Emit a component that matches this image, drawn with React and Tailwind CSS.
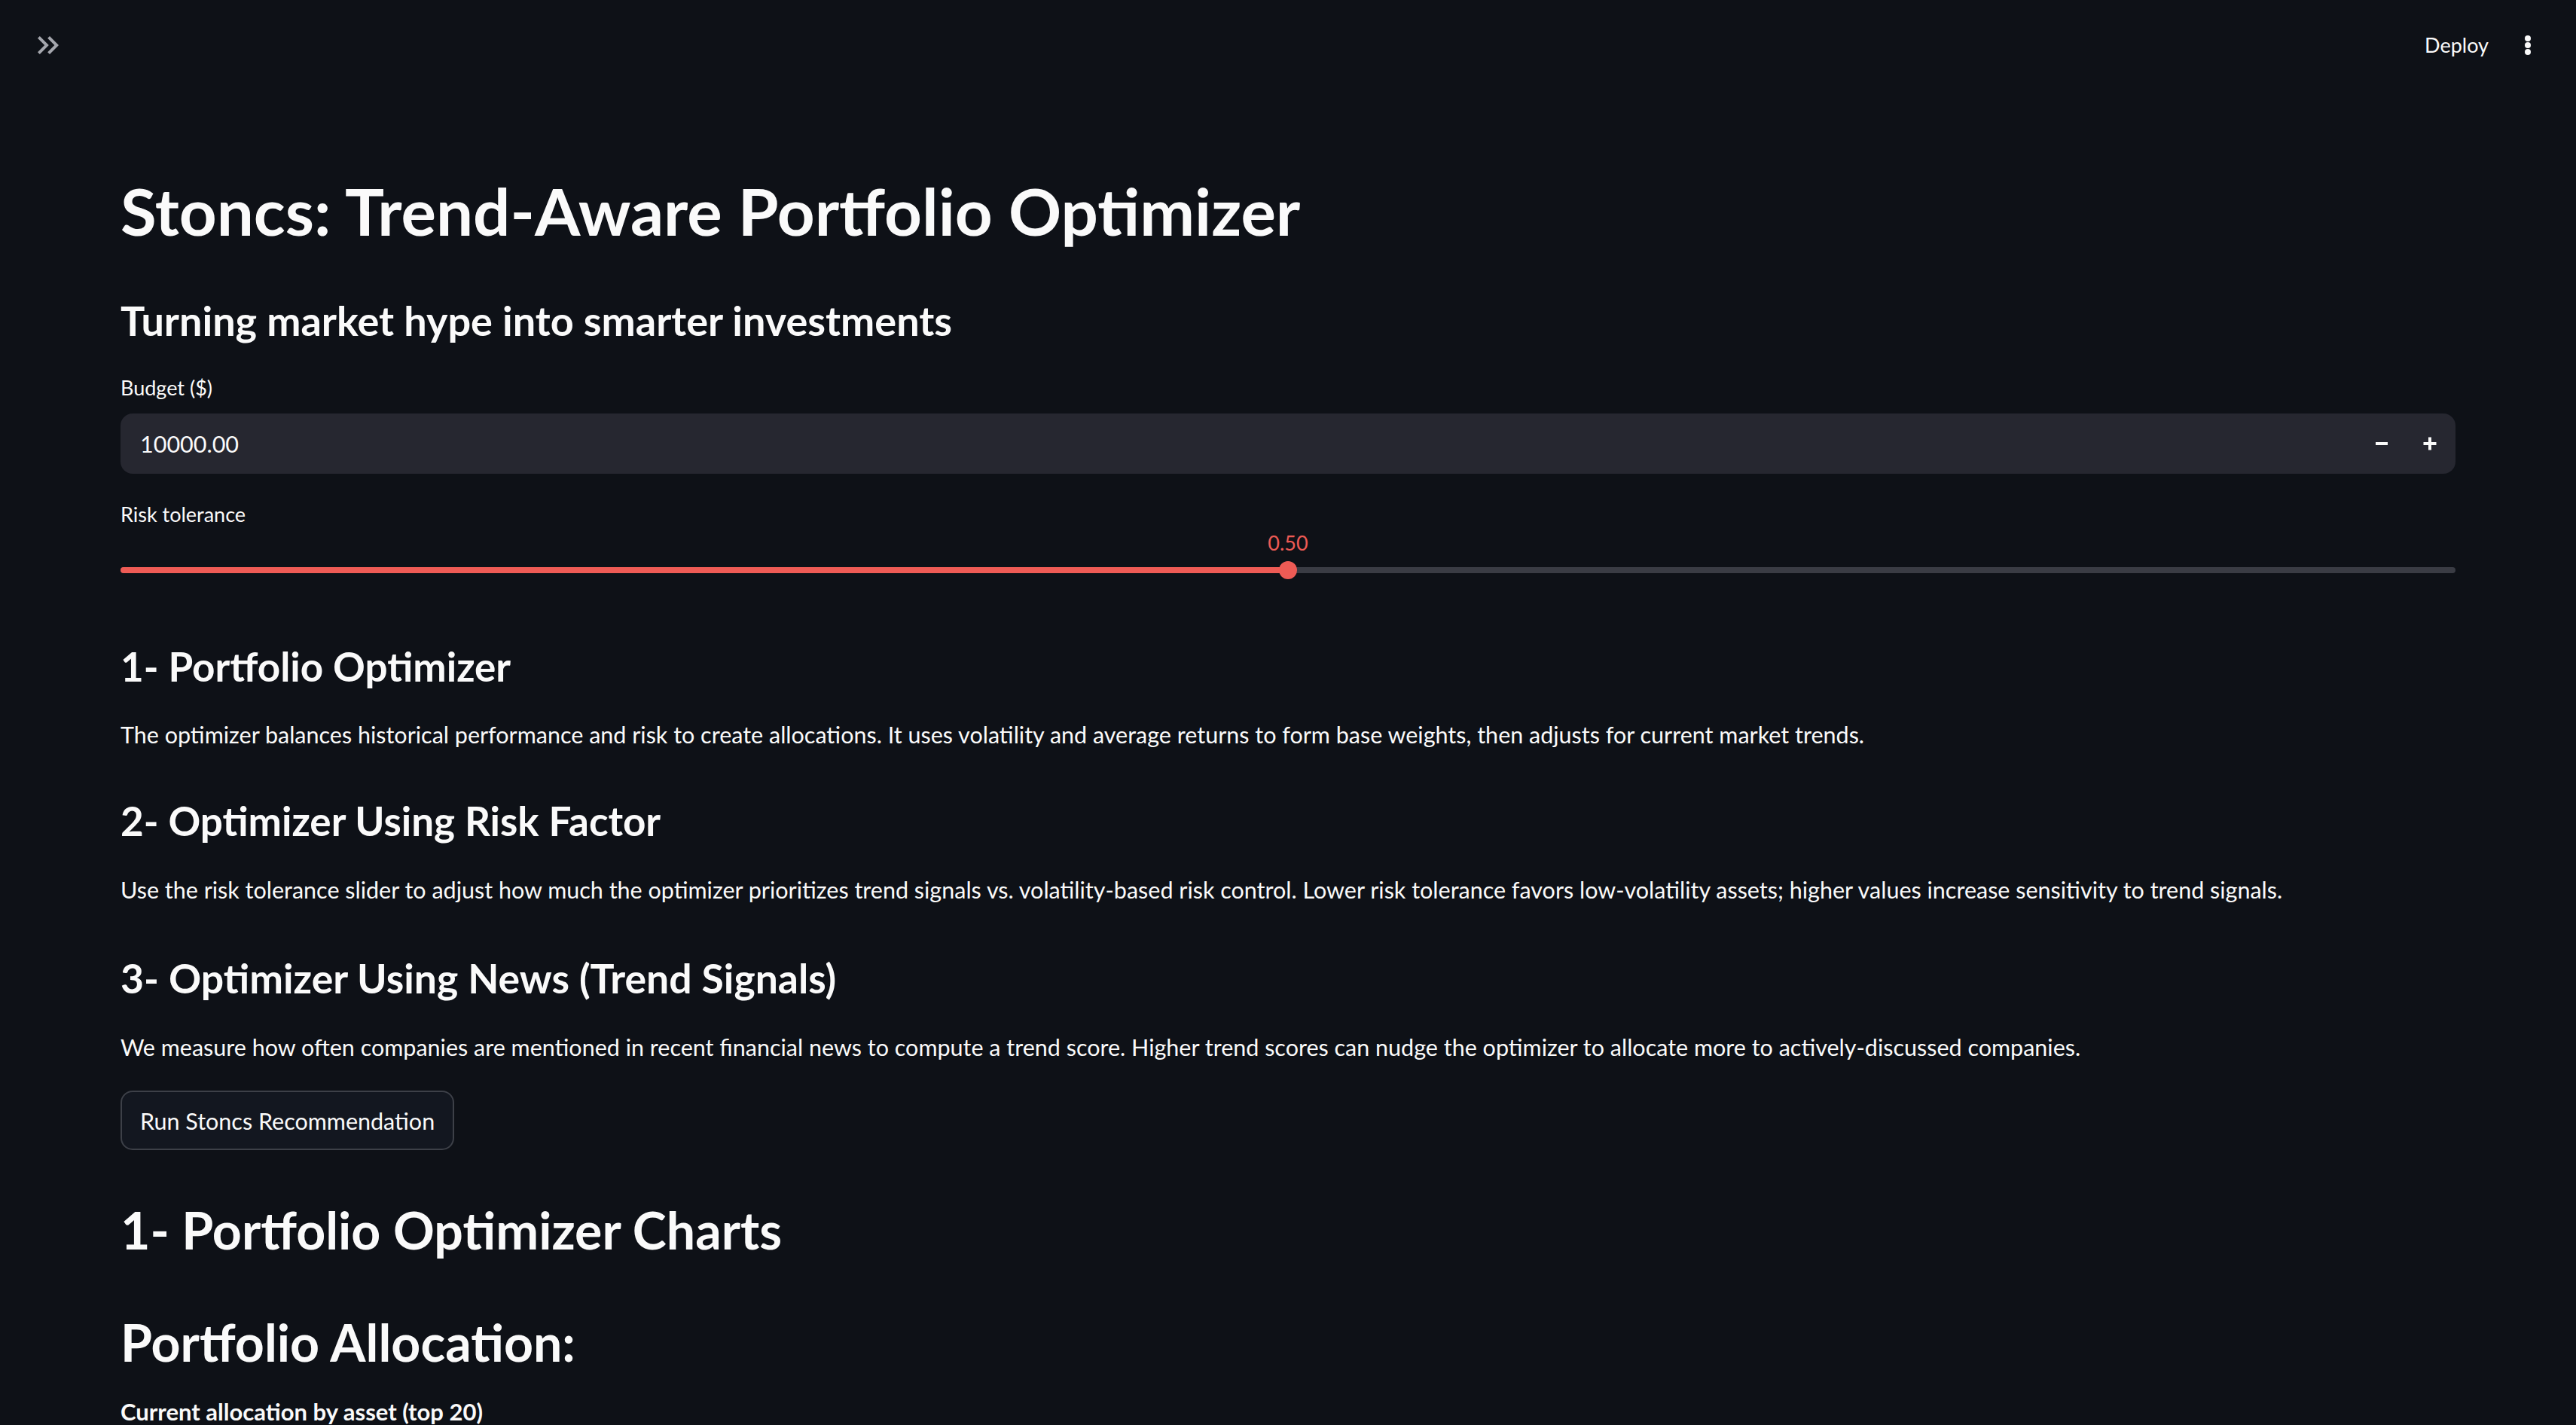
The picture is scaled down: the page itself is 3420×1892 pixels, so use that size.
import React from "react";

function ChevronsIcon() {
  return (
    <svg width="48" height="48" viewBox="0 0 24 24" fill="#a4a6ad">
      <path d="M6.41 6 5 7.41 9.58 12 5 16.59 6.41 18l6-6z" />
      <path d="M13 6l-1.41 1.41L16.17 12l-4.58 4.59L13 18l6-6z" />
    </svg>
  );
}

function DotsIcon() {
  return (
    <svg width="40" height="40" viewBox="0 0 40 40" fill="#fafafa">
      <circle cx="20" cy="11" r="4" />
      <circle cx="20" cy="20" r="4" />
      <circle cx="20" cy="29" r="4" />
    </svg>
  );
}

function MinusIcon() {
  return (
    <svg width="18" height="18" viewBox="0 0 18 18">
      <rect x="1" y="7" width="16" height="4" fill="#fafafa" />
    </svg>
  );
}

function PlusIcon() {
  return (
    <svg width="18" height="18" viewBox="0 0 18 18">
      <rect x="0.5" y="7" width="17" height="4" fill="#fafafa" />
      <rect x="7" y="0.5" width="4" height="17" fill="#fafafa" />
    </svg>
  );
}

export default function App() {
  return (
    <div className="min-h-screen w-full bg-[#0e1117] text-[#fafafa] font-['Lato','Noto_Sans',sans-serif]">
      {/* Header */}
      <div className="h-[120px] flex items-center justify-between pl-[40px] pr-[44px]">
        <ChevronsIcon />
        <div className="flex items-center gap-[32px]">
          <span className="text-[27px] leading-[40px]">Deploy</span>
          <DotsIcon />
        </div>
      </div>

      {/* Main */}
      <div className="pl-[160px] pr-[160px] flex flex-col">
        <h1 className="mt-[108px] text-[87px] leading-[104px] font-bold">
          Stoncs: Trend-Aware Portfolio Optimizer
        </h1>
        <h3 className="mt-[58px] text-[54px] leading-[72px] font-bold">
          Turning market hype into smarter investments
        </h3>

        <label className="mt-[33px] text-[27px] leading-[40px]">Budget ($)</label>
        <div className="mt-[14px] h-[80px] rounded-[16px] bg-[#262730] flex items-center">
          <span className="flex-1 pl-[26px] text-[30.5px] leading-[48px]">10000.00</span>
          <div className="flex items-center pr-[2px]">
            <div className="w-[64px] h-[80px] flex items-center justify-center">
              <MinusIcon />
            </div>
            <div className="w-[64px] h-[80px] flex items-center justify-center">
              <PlusIcon />
            </div>
          </div>
        </div>

        <label className="mt-[34px] text-[27px] leading-[40px]">Risk tolerance</label>
        <div className="relative h-[78px] pt-[50px]">
          <div className="h-[8px] rounded-full bg-[#3a3c44] flex">
            <div className="w-1/2 h-full rounded-l-full bg-[#ee5b55]" />
          </div>
          <div className="absolute left-1/2 -translate-x-1/2 top-[-2px] text-[27px] leading-[40px] text-[#ee5b55]">
            0.50
          </div>
          <div className="absolute left-1/2 -translate-x-1/2 top-[42px] w-[24px] h-[24px] rounded-full bg-[#ee5b55]" />
        </div>

        <h3 className="mt-[68px] text-[53px] leading-[72px] font-bold">1- Portfolio Optimizer</h3>
        <p className="mt-[30px] text-[30.5px] leading-[48px]">
          The optimizer balances historical performance and risk to create allocations. It uses volatility and average returns to form base weights, then adjusts for current market trends.
        </p>

        <h3 className="mt-[55px] text-[53px] leading-[72px] font-bold">2- Optimizer Using Risk Factor</h3>
        <p className="mt-[31px] text-[30.5px] leading-[48px]">
          Use the risk tolerance slider to adjust how much the optimizer prioritizes trend signals vs. volatility-based risk control. Lower risk tolerance favors low-volatility assets; higher values increase sensitivity to trend signals.
        </p>

        <h3 className="mt-[57px] text-[53.5px] leading-[72px] font-bold">3- Optimizer Using News (Trend Signals)</h3>
        <p className="mt-[32px] text-[30.5px] leading-[48px]">
          We measure how often companies are mentioned in recent financial news to compute a trend score. Higher trend scores can nudge the optimizer to allocate more to actively-discussed companies.
        </p>

        <div className="mt-[34px]">
          <button className="h-[79px] px-[24px] rounded-[16px] border-2 border-[#3d4048] bg-[#131720] text-[30.5px] leading-[48px] text-[#fafafa]">
            Run Stoncs Recommendation
          </button>
        </div>

        <h2 className="mt-[62px] text-[68px] leading-[88px] font-bold">1- Portfolio Optimizer Charts</h2>
        <h2 className="mt-[61px] text-[68px] leading-[88px] font-bold">Portfolio Allocation:</h2>
        <p className="mt-[24px] text-[31px] leading-[48px] font-bold">Current allocation by asset (top 20)</p>
      </div>
    </div>
  );
}
